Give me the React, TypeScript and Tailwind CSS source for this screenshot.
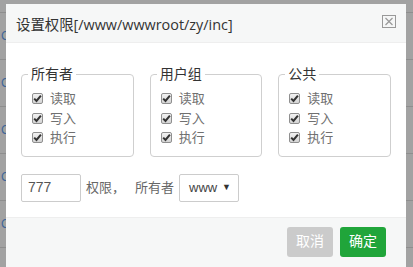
import React from 'react'

const font = { fontFamily: '"Liberation Sans", "Noto Sans CJK SC", sans-serif' }
const titleFont = { fontFamily: '"Open Sans", "Noto Sans CJK SC", sans-serif' }

function Box() {
    return (
        <span className="flex h-[11px] w-[11px] items-center justify-center rounded-[2px] border border-[#8f8f8f] bg-gradient-to-b from-[#f2f2f2] to-[#d4d4d4]">
            <svg width="9" height="9" viewBox="0 0 9 9">
                <path d="M1.2 4.6 L3.5 7 L7.9 1.6" fill="none" stroke="#333" strokeWidth="2" />
            </svg>
        </span>
    )
}

function Group({ title }: { title: string }) {
    return (
        <fieldset className="w-[113px] rounded-[4px] border border-[#cfcfcf] px-[6px] pb-[8px] pt-0">
            <legend className="px-[3px] text-[14px] leading-[20px] text-[#333]">{title}</legend>
            <div className="flex flex-col pl-[4px] pt-[5px]">
                {['读取', '写入', '执行'].map((t) => (
                    <label key={t} className="flex h-[19.5px] items-center gap-[7px] text-[13px] text-[#707070]">
                        <Box />
                        <span>{t}</span>
                    </label>
                ))}
            </div>
        </fieldset>
    )
}

export default function App() {
    return (
        <div className="relative h-[267px] w-[413px] overflow-hidden bg-[#a2a2a2]" style={font}>
            {/* page behind the overlay */}
            <div className="flex flex-col pt-[12px]">
                {['C', 'C', 'C', 'C', 'C', ''].map((c, i) => (
                    <div key={i} className="flex h-[47px] items-center border-t border-[#8e8e8e] pl-[1px] text-[12px] text-[#3f6699]">
                        {c}
                    </div>
                ))}
            </div>

            {/* dialog */}
            <div className="absolute left-[6px] top-[4px] w-[400px] bg-white">
                <div className="flex h-[39px] items-center justify-between border-b border-[#eeeeee] bg-[#f6f7f7] pl-[10px] pr-[10px]">
                    <span className="pt-[4px] text-[14.4px] text-[#333]" style={titleFont}>
                        设置权限[/www/wwwroot/zy/inc]
                    </span>
                    <span className="-mt-[4px] flex h-[13px] w-[14px] items-center justify-center border border-[#999]">
                        <svg width="10" height="9" viewBox="0 0 10 9">
                            <path d="M1.5 1 L8.5 8 M8.5 1 L1.5 8" stroke="#999" strokeWidth="1.2" />
                        </svg>
                    </span>
                </div>

                <div className="px-[15px] pb-[15px] pt-[21px]">
                    <div className="flex gap-[16px]">
                        <Group title="所有者" />
                        <Group title="用户组" />
                        <Group title="公共" />
                    </div>
                    <div className="mt-[17px] flex items-center text-[13px] text-[#666]">
                        <div className="flex h-[28px] w-[60px] items-center rounded-[2px] border border-[#ccc] pl-[6px] text-[14px] text-[#555]">777</div>
                        <span className="ml-[5px]">权限，</span>
                        <span className="ml-[10px]">所有者</span>
                        <div className="ml-[5px] flex h-[28px] w-[60px] items-center justify-between rounded-[2px] border border-[#ccc] pl-[9px] pr-[7px] text-[13px] text-[#444]">
                            <span>www</span>
                            <span className="text-[9px] text-[#333]">▼</span>
                        </div>
                    </div>
                </div>

                <div className="flex h-[60px] items-start justify-end gap-[7px] border-t border-[#eeeeee] bg-[#f6f7f7] pr-[20px] pt-[9px]">
                    <button className="h-[30px] w-[46px] rounded-[3px] bg-[#cbcbcb] text-[14px] text-white">取消</button>
                    <button className="h-[30px] w-[46px] rounded-[3px] bg-[#20a53a] text-[14px] text-white">确定</button>
                </div>
            </div>
        </div>
    )
}
